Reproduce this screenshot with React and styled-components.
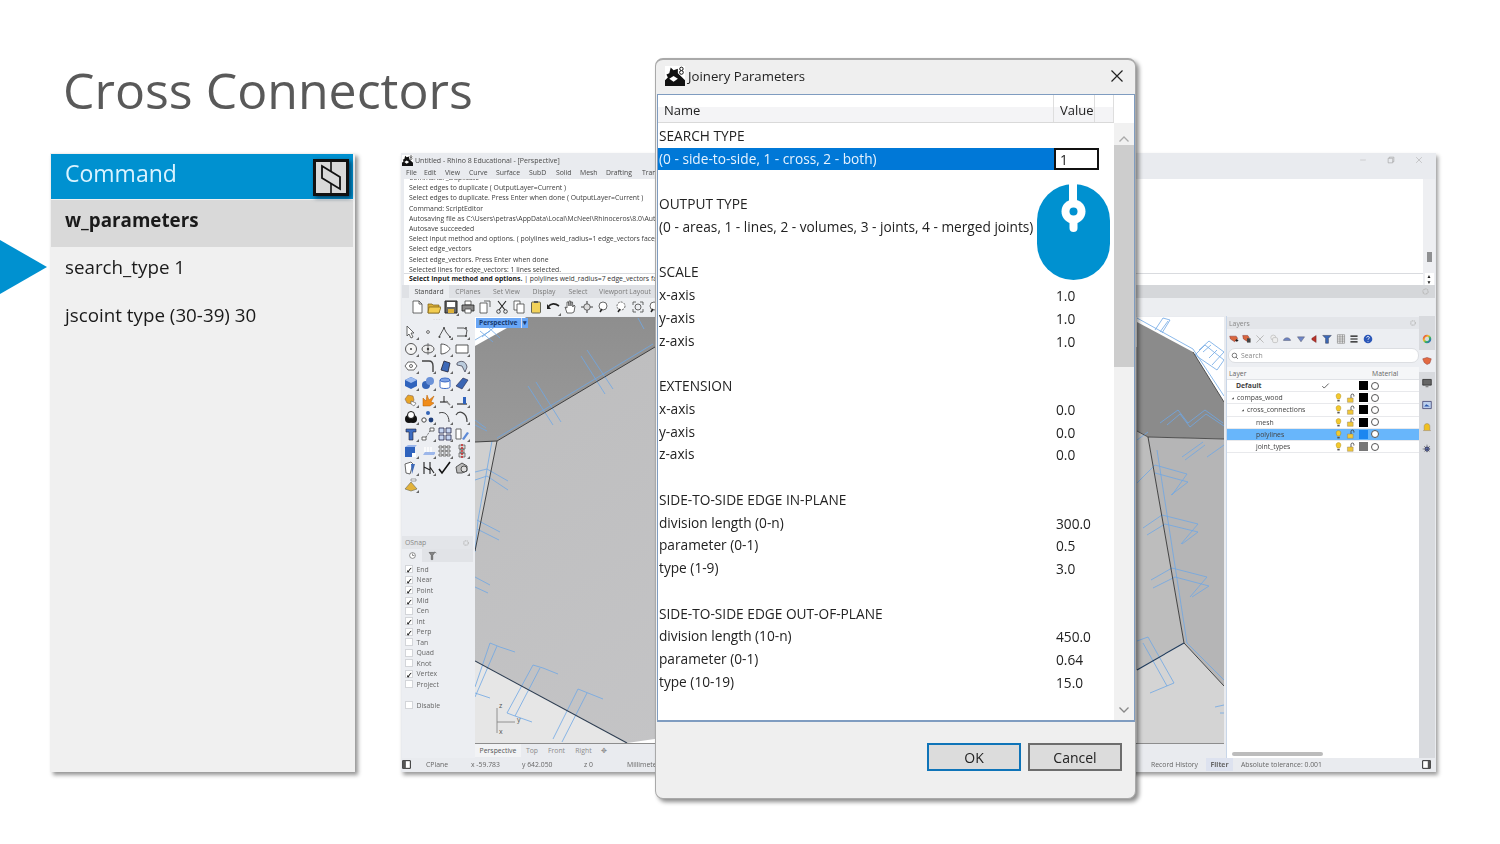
import React from 'react';
import styled, { createGlobalStyle } from 'styled-components';

const Global = createGlobalStyle`
  html, body { margin: 0; padding: 0; background: #fff; }
  body { font-family: "Open Sans", "Noto Sans", sans-serif; }
`;

const Slide = styled.div`
  position: relative;
  width: 1500px;
  height: 844px;
  overflow: hidden;
  background: #fff;
`;
const TitleBlock = styled.header`
  height: 153px;
  box-sizing: border-box;
  padding: 54px 0 0 63px;
`;
const Title = styled.h1`
  margin: 0;
  font: 400 50px/72px "Open Sans", sans-serif;
  color: #595959;
`;
const Content = styled.div`
  display: flex;
  align-items: flex-start;
`;
const Pointer = styled.div`
  width: 0;
  height: 0;
  margin-top: 87px;
  margin-right: 3px;
  border-left: 47px solid #0091d0;
  border-top: 27px solid transparent;
  border-bottom: 27px solid transparent;
`;
const CommandPanel = styled.section`
  position: relative;
  width: 305px;
  height: 619px;
  flex: none;
  margin-right: 46px;
  background: #f0f0f0;
  box-shadow: 3px 3px 4px rgba(0, 0, 0, 0.42);
  filter: blur(0.2px);
`;
const CommandHead = styled.div`
  height: 45px;
  margin: 1px 2px 0 1px;
  padding-left: 14px;
  background: #0091d0;
  color: #d9f3ff;
  font-size: 23px;
  line-height: 39px;
`;
const CommandRow = styled.div`
  height: 47px;
  margin: 1px 2px 0 1px;
  padding-left: 14px;
  font-size: 18.8px;
  line-height: ${p => (p.$head ? 40 : 38)}px;
  font-weight: ${p => (p.$head ? 700 : 400)};
  background: ${p => (p.$head ? '#d9d9d9' : 'transparent')};
  color: #1a1a1a;
`;
const CommandLogo = styled.svg`
  position: absolute;
  left: 263px;
  top: 6px;
  width: 36px;
  height: 37px;
  filter: drop-shadow(2px 2px 2px rgba(0, 40, 70, 0.8));
`;

/* Rhino window */
const RhinoWindow = styled.section`
  width: 1035px;
  height: 619px;
  flex: none;
  box-sizing: border-box;
  padding: 0 1px;
  display: flex;
  flex-direction: column;
  background: #e9ebef;
  box-shadow: 2px 3px 4px rgba(0, 0, 0, 0.4);
  font-size: 6.85px;
  color: #4a4a4a;
  filter: blur(0.42px);
`;
const RhinoTitle = styled.div`
  height: 14px;
  display: flex;
  align-items: center;
  gap: 2px;
  padding-left: 0;
  font-size: 7px;
`;
const WindowControls = styled.div`
  margin-left: auto;
  display: flex;
  gap: 20px;
  padding-right: 12px;
`;
const MenuBar = styled.nav`
  height: 12px;
  display: flex;
  align-items: center;
  padding: 0 0 1px 4px;
  box-sizing: border-box;
`;
const MenuItem = styled.span`
  width: ${p => p.$w}px;
`;
const History = styled.div`
  position: relative;
  height: 106px;
  margin: 0 12px 0 2px;
  background: #fff;
  overflow: hidden;
  color: #3c3c3c;
`;
const HistoryLines = styled.div`
  margin-top: -6px;
  padding-left: 5px;
  height: 100px;
`;
const HistoryLine = styled.div`
  height: 10.2px;
  line-height: 10.2px;
  white-space: nowrap;
`;
const HistoryInput = styled.div`
  position: absolute;
  left: 0;
  right: 0;
  top: 94px;
  height: 12px;
  border-top: 1px solid #d9dbdf;
  padding-left: 5px;
  line-height: 10px;
  white-space: nowrap;
  color: #333;
  background: #fff;
  b { color: #222; }
`;
const ScrollColumn = styled.div`
  height: 106px;
  margin-top: -106px;
  margin-left: auto;
  width: 12px;
  display: flex;
  flex-direction: column;
  align-items: center;
  background: #eeeff2;
`;
const ScrollThumb = styled.div`
  width: 5px;
  height: 10px;
  margin-top: 73px;
  background: #8f9092;
`;
const ScrollSpin = styled.div`
  margin-top: 11px;
  width: 9px;
  height: 12px;
  background: #fff;
  font-size: 5px;
  line-height: 6px;
  text-align: center;
  color: #222;
`;
const TabRow = styled.div`
  height: 13px;
  display: flex;
  align-items: center;
  background: linear-gradient(90deg, #dfe1e5 0 25%, #d5d7da 60%);
  padding-left: 7px;
  color: #777;
`;
const TabItem = styled.span`
  width: ${p => p.$w}px;
  text-align: center;
  color: ${p => (p.$on ? '#444' : '#7b7b7b')};
  background: ${p => (p.$on ? '#eceef1' : 'transparent')};
  line-height: 13px;
`;
const GearSlot = styled.span`
  margin-left: auto;
  padding-right: 5px;
  display: flex;
`;
const TopToolbar = styled.div`
  height: 18px;
  display: flex;
  align-items: center;
  padding-left: 6px;
  background: #eceef1;
`;
const ToolCell = styled.div`
  position: relative;
  width: ${p => p.$size || 17}px;
  height: ${p => p.$size || 17}px;
  display: flex;
  align-items: center;
  justify-content: center;
  flex: none;
  &::after {
    content: '';
    display: ${p => (p.$corner ? 'block' : 'none')};
    position: absolute;
    right: 0;
    bottom: 0;
    border-left: 3px solid transparent;
    border-bottom: 3px solid #666;
  }
`;
const Icon = styled.svg`
  width: ${p => p.$size || 14}px;
  height: ${p => p.$size || 14}px;
  display: block;
  flex: none;
`;
const Main = styled.div`
  flex: 1;
  display: flex;
  min-height: 0;
`;
const ToolColumn = styled.aside`
  width: 73px;
  flex: none;
  display: flex;
  flex-direction: column;
  background: #eceef2;
`;
const Grip = styled.div`
  height: 7px;
  text-align: center;
  font-size: 6px;
  line-height: 6px;
  letter-spacing: 1px;
  color: #aaa;
`;
const ToolGrid = styled.div`
  display: grid;
  grid-template-columns: repeat(4, 17px);
  grid-auto-rows: 17px;
`;
const SnapHead = styled.div`
  margin-top: auto;
  height: 13px;
  margin-right: 2px;
  display: flex;
  align-items: center;
  justify-content: space-between;
  padding: 0 3px;
  background: #e3e5e9;
  color: #888;
`;
const SnapTabs = styled.div`
  height: 13px;
  display: flex;
  background: #e1e3e7;
  margin-right: 2px;
`;
const SnapTab = styled.div`
  width: ${p => p.$w}px;
  display: flex;
  align-items: center;
  justify-content: center;
  background: ${p => (p.$on ? '#eceef2' : 'transparent')};
`;
const SnapList = styled.div`
  padding: 2px 0 0 3px;
  height: 196px;
  box-sizing: border-box;
`;
const SnapRow = styled.div`
  height: 10.45px;
  display: flex;
  align-items: center;
  gap: 3.5px;
  color: #666;
  margin-top: ${p => (p.$gap ? 11 : 0)}px;
`;
const SnapBox = styled.span`
  width: 8px;
  height: 8px;
  background: #fff;
  border: 0.5px solid #d3d5d9;
  box-sizing: border-box;
  font-size: 8px;
  line-height: 7px;
  text-align: center;
  color: #111;
  font-weight: 700;
`;
const ViewColumn = styled.div`
  position: relative;
  width: 749px;
  flex: none;
  display: flex;
  flex-direction: column;
`;
const ViewCanvas = styled.svg`
  display: block;
  width: 749px;
  height: 426px;
  margin-top: 1px;
`;
const ViewLabel = styled.div`
  position: absolute;
  left: 1px;
  top: 2px;
  height: 10px;
  width: 52px;
  display: flex;
  background: #69a6f6;
  color: #173a70;
  font-weight: 700;
  font-size: 6.6px;
  line-height: 10px;
  padding-left: 3px;
  box-sizing: border-box;
  justify-content: space-between;
  span:last-child { border-left: 1px solid #dde; padding: 0 1px; }
`;
const ViewTabs = styled.div`
  height: 14px;
  border-top: 1px solid #8d8d8d;
  box-sizing: border-box;
  display: flex;
  align-items: center;
  background: #e9ebef;
  color: #888;
`;
const ViewTab = styled.span`
  width: ${p => p.$w}px;
  text-align: center;
  line-height: 13px;
  color: ${p => (p.$on ? '#555' : '#8c8c8c')};
  background: ${p => (p.$on ? '#f2f3f5' : 'transparent')};
`;
const LayersPanel = styled.aside`
  width: 193px;
  flex: none;
  margin-left: 2px;
  display: flex;
  flex-direction: column;
  background: #eceef2;
  border-left: 1px solid #c8d6e8;
  box-sizing: border-box;
`;
const LayersHead = styled.div`
  height: 12px;
  margin-top: 1px;
  padding: 0 2px;
  display: flex;
  align-items: center;
  justify-content: space-between;
  background: #e3e5e9;
  color: #888;
`;
const LayerTools = styled.div`
  height: 17px;
  display: flex;
  align-items: center;
  margin-top: 2px;
`;
const SearchBox = styled.div`
  height: 13px;
  margin: 0 0 4px 1px;
  border-radius: 7px;
  background: #fff;
  display: flex;
  align-items: center;
  gap: 2px;
  padding-left: 2px;
  color: #888;
  border: 0.5px solid #dcdee2;
`;
const LayerBody = styled.div`
  flex: 1;
  background: #fff;
  position: relative;
`;
const LayerHeader = styled.div`
  height: 13px;
  display: grid;
  grid-template-columns: 94px 12px 13px 13px 10px 60px;
  align-items: center;
  background: #f5f6f8;
  border-bottom: 0.5px solid #e0e2e6;
  box-sizing: border-box;
  color: #666;
`;
const LayerRow = styled.div`
  height: 12.2px;
  display: grid;
  grid-template-columns: 94px 12px 13px 13px 10px 12px 1fr;
  align-items: center;
  border-bottom: 0.5px solid #e8e9ec;
  box-sizing: border-box;
  background: ${p => (p.$sel ? '#68b6fb' : 'transparent')};
  color: #444;
`;
const LayerName = styled.span`
  padding-left: ${p => p.$indent}px;
  font-weight: ${p => (p.$bold ? 700 : 400)};
  white-space: nowrap;
  display: flex;
  align-items: center;
  gap: 2px;
`;
const Swatch = styled.span`
  width: 9px;
  height: 9px;
  background: ${p => p.$c};
`;
const Radio = styled.span`
  width: 8px;
  height: 8px;
  margin-left: 2px;
  border-radius: 50%;
  background: ${p => (p.$on ? '#fff' : 'transparent')};
  border: 0.6px solid #555;
  box-sizing: border-box;
`;
const LayerScroll = styled.div`
  position: absolute;
  left: 5px;
  bottom: 2px;
  width: 91px;
  height: 4px;
  border-radius: 2px;
  background: #bcbcbc;
`;
const SideStrip = styled.aside`
  width: 16px;
  flex: none;
  padding-top: 12px;
  background: #d8dade;
  display: flex;
  flex-direction: column;
  align-items: center;
`;
const StripTab = styled.div`
  height: 22px;
  width: 100%;
  display: flex;
  align-items: center;
  justify-content: center;
  background: ${p => (p.$on ? '#eceef2' : 'transparent')};
`;
const StatusBar = styled.footer`
  height: 14px;
  padding-bottom: 1px;
  box-sizing: border-box;
  display: flex;
  align-items: center;
  color: #666;
  background: #e9ebef;
`;
const StatusItem = styled.span`
  width: ${p => p.$w}px;
  flex: none;
  white-space: nowrap;
  overflow: hidden;
  font-weight: ${p => (p.$on ? 700 : 400)};
  background: ${p => (p.$on ? '#dde2ef' : 'transparent')};
  text-align: ${p => (p.$on ? 'center' : 'left')};
  line-height: 13px;
`;

/* Dialog */
const Dialog = styled.section`
  position: absolute;
  left: 655px;
  top: 58px;
  width: 481px;
  height: 741px;
  box-sizing: border-box;
  display: flex;
  flex-direction: column;
  border-radius: 8px;
  background: #efefef;
  border: 1px solid #a9a9a9;
  border-top-width: 2px;
  box-shadow: 3px 3px 4px rgba(0, 0, 0, 0.45);
  font-family: "Open Sans", sans-serif;
  color: #222;
  filter: blur(0.3px);
`;
const DialogTitle = styled.div`
  height: 34px;
  flex: none;
  box-sizing: border-box;
  display: flex;
  align-items: center;
  padding: 0 11px 2px 9px;
  gap: 3px;
  font-size: 13.2px;
`;
const CloseGlyph = styled.svg`
  margin-left: auto;
  width: 14px;
  height: 14px;
`;
const TableBox = styled.div`
  flex: 1;
  min-height: 0;
  margin: 0 0 0 1px;
  border: 1px solid #7f9cc0;
  border-width: 1px 1px 2px 1px;
  background: #fff;
  display: flex;
  flex-direction: column;
  overflow: hidden;
`;
const TableHead = styled.div`
  height: 28px;
  width: 456px;
  flex: none;
  display: grid;
  grid-template-columns: 396px 41px 19px;
  background: linear-gradient(#fff 0 12px, #f4f4f6 12px);
  border-bottom: 1px solid #d9d9d9;
  font-size: 13px;
  box-sizing: border-box;
`;
const HeadCell = styled.div`
  padding: 6px 0 0 ${p => p.$pad}px;
  line-height: 18px;
  border-right: 1px solid #dedede;
`;
const TableBody = styled.div`
  flex: 1;
  min-height: 0;
  display: flex;
`;
const Rows = styled.div`
  width: 456px;
  flex: none;
  padding-top: 1.9px;
`;
const Row = styled.div`
  height: 22.75px;
  display: grid;
  grid-template-columns: 396px 60px;
  align-items: center;
  font-size: 13.7px;
  white-space: nowrap;
`;
const RowName = styled.div`
  height: 100%;
  line-height: 22.75px;
  padding-left: 1px;
  background: ${p => (p.$sel ? '#0078d7' : 'transparent')};
  color: ${p => (p.$sel ? '#e6f3ff' : '#222')};
`;
const RowValue = styled.div`
  padding-left: 2px;
`;
const ValueInput = styled.div`
  width: 45px;
  height: 22.75px;
  box-sizing: border-box;
  border: 2px solid #111;
  background: #fff;
  line-height: 19px;
  padding-left: 4px;
`;
const DialogScroll = styled.div`
  flex: 1;
  margin-top: -28px;
  display: flex;
  flex-direction: column;
  align-items: center;
  background: #f1f1f1;
`;
const ScrollCap = styled.div`
  height: ${p => p.$h}px;
  display: flex;
  align-items: flex-end;
  justify-content: center;
  width: 100%;
  padding-bottom: ${p => p.$pb}px;
  box-sizing: border-box;
  background: ${p => (p.$white ? 'linear-gradient(#fff 0 28px, #f1f1f1 28px)' : 'transparent')};
`;
const DialogThumb = styled.div`
  height: 222px;
  width: 100%;
  background: #cdcdcd;
  flex: none;
`;
const ScrollFill = styled.div`
  flex: 1;
`;
const DialogFooter = styled.div`
  height: 76px;
  flex: none;
  display: flex;
  justify-content: flex-end;
  gap: 7px;
  padding: 21px 13px 0 0;
  box-sizing: border-box;
`;
const DialogButton = styled.div`
  width: 94px;
  height: 28px;
  box-sizing: border-box;
  border: 2px solid ${p => (p.$primary ? '#0f74b8' : '#6d6d6d')};
  background: #dcdcdc;
  text-align: center;
  font-size: 14px;
  line-height: 25px;
  color: #222;
`;
const MouseBadge = styled.svg`
  position: absolute;
  left: 1037px;
  top: 184px;
  width: 73px;
  height: 96px;
`;

const s = '#444';
const b = '#3e6cc6';
const ICONS = {
  newdoc: <><path d="M3 1h6l3 3v9H3z" fill="#fff" stroke={s} strokeWidth=".8" /><path d="M9 1v3h3" fill="none" stroke={s} strokeWidth=".8" /></>,
  open: <><path d="M1 4h4l1 1h6v8H1z" fill="#d9b03c" stroke="#7a5c10" strokeWidth=".7" /><path d="M2 7h12l-2 6H1z" fill="#f2cc50" stroke="#7a5c10" strokeWidth=".7" /></>,
  save: <><path d="M1 1h12v12H1z" fill="#666" stroke="#222" /><path d="M3 2h8v5H3z" fill="#fff" /><path d="M4 9h6v4H4z" fill="#ddb13a" /></>,
  print: <><path d="M4 1h6v4H4z" fill="#fff" stroke={s} strokeWidth=".8" /><path d="M1 5h12v6H1z" fill="#888" stroke="#222" strokeWidth=".8" /><path d="M4 9h6v4H4z" fill="#fff" stroke={s} strokeWidth=".8" /></>,
  copydoc: <><path d="M2 3h7v10H2z" fill="#fff" stroke={s} strokeWidth=".8" /><path d="M6 1h6v6" fill="none" stroke={s} strokeWidth=".8" /></>,
  cut: <><path d="M3 1l7 9M11 1l-7 9" stroke="#222" strokeWidth="1.1" /><circle cx="3.500" cy="11.500" r="1.800" fill="none" stroke={s} /><circle cx="10.500" cy="11.500" r="1.800" fill="none" stroke={s} /></>,
  dup: <><path d="M2 1h6v9H2z" fill="#fff" stroke={s} strokeWidth=".8" /><path d="M5 4h7v9H5z" fill="#fff" stroke={s} strokeWidth=".8" /></>,
  paste: <><rect x="2.500" y="2" width="9" height="11" rx="1" fill="#f2d25a" stroke="#665" /><path d="M5 1h4v2H5z" fill="#555" /></>,
  undo: <><path d="M2 7c3-4 7-4 11-1" fill="none" stroke="#222" strokeWidth="1.6" /><path d="M1 4v5h4z" fill="#222" /></>,
  hand: <path d="M4 13L2 7l2 1V2l1.500 0 .5 4V1h1.500l.5 5V2h1.500l.3 5 1.200-2 1 1-1 6-2 1z" fill="#fff" stroke={s} strokeWidth=".8" />,
  move: <><path d="M7 1v12M1 7h12" stroke={s} strokeWidth="1.100" /><circle cx="7" cy="7" r="3.200" fill="#ddd" stroke={s} strokeWidth=".8" /></>,
  zoom: <><circle cx="6" cy="6" r="4" fill="#fff" stroke={s} strokeWidth=".8" /><path d="M3 12l2-3" stroke="#222" strokeWidth="1.500" /></>,
  zoomd: <><circle cx="7" cy="6" r="4" fill="#fff" stroke={s} strokeWidth=".8" strokeDasharray="2 1" /><path d="M4 12l2-3" stroke="#222" strokeWidth="1.500" /></>,
  zoomx: <><path d="M2 2h3M9 2h3M2 12h3M9 12h3M2 2v3M12 2v3M2 9v3M12 9v3" stroke={s} strokeWidth=".8" /><circle cx="7" cy="7" r="3" fill="none" stroke={s} strokeWidth=".8" /></>,
  arrow: <path d="M3 1l7 7H7l2 4-2 1-2-4-2 2z" fill="#fff" stroke={s} strokeWidth=".8" />,
  point: <circle cx="7" cy="7" r="1.400" fill="#fff" stroke={s} strokeWidth=".8" />,
  poly: <><path d="M1 12l5-9 2 4 4 5" fill="none" stroke={s} strokeWidth=".9" /><circle cx="6" cy="3" r="1" fill={s} /><circle cx="1.500" cy="12" r="1" fill={s} /><circle cx="12" cy="12" r="1" fill={s} /></>,
  curve: <><path d="M2 3h7l3 2-1 6H2" fill="none" stroke={s} strokeWidth=".9" /><circle cx="11" cy="3" r="1" fill={s} /><circle cx="11" cy="11" r="1" fill={s} /></>,
  circle: <><circle cx="7" cy="7" r="5.500" fill="#f5f5f5" stroke={s} strokeWidth=".9" /><circle cx="7" cy="7" r="1" fill={s} /></>,
  ellipse: <><ellipse cx="7" cy="7" rx="6" ry="4" fill="#eee" stroke={s} strokeWidth=".9" /><circle cx="7" cy="7" r="1.200" fill={s} /><path d="M7 1v12" stroke={s} strokeWidth=".6" /></>,
  arc: <path d="M3 2c7 0 9 5 9 5s-3 5-9 5z" fill="#fff" stroke={s} strokeWidth=".9" />,
  rect: <path d="M1 3h12v8H1z" fill="#fff" stroke={s} strokeWidth=".9" />,
  hex: <><path d="M1 7l3-4h6l3 4-3 4H4z" fill="#fff" stroke={s} strokeWidth=".8" /><circle cx="7" cy="7" r="1.500" fill="none" stroke={s} strokeWidth=".8" /></>,
  fillet: <path d="M1 2h7c3 0 4 2 4 5v6" fill="none" stroke="#444" strokeWidth="1.400" />,
  surf: <path d="M3 11l3-9 6 2-2 9z" fill="#3d69b8" stroke="#223" strokeWidth=".8" />,
  patch: <path d="M2 4c4-3 9-2 10 4l-2 5-3-6-5-1z" fill="#bcd" stroke="#445" strokeWidth=".8" />,
  box: <><path d="M1 4l6-3 6 3v6l-6 3-6-3z" fill="#2f63bd" /><path d="M1 4l6 3 6-3-6-3z" fill="#9dbcf0" /></>,
  balls: <><circle cx="5" cy="9" r="4" fill="#3565b8" /><circle cx="9" cy="5" r="4" fill="#6b92d8" /></>,
  cyl: <><path d="M2 4v7c0 2 10 2 10 0V4z" fill="#fff" stroke={b} /><ellipse cx="7" cy="4" rx="5" ry="2" fill="#7ea2e4" stroke={b} /></>,
  plane: <path d="M1 10l7-8 5 2-6 9z" fill="#3b66b4" stroke="#224" strokeWidth=".6" />,
  orange: <><path d="M1 6l3-4 5 1 1 4-2 4-5-1z" fill="#e8a526" stroke="#865" strokeWidth=".6" /><path d="M7 8l5 2-2 3-3-2z" fill="#fff" stroke="#555" strokeWidth=".6" /></>,
  burst: <path d="M2 13V5l3 3 1-6 2 5 5-4-3 6 3 1-4 3z" fill="#f08c1a" stroke="#b65c00" strokeWidth=".5" />,
  dimL: <><path d="M2 9h8" stroke="#222" strokeWidth="1.100" /><path d="M6 3v6" stroke="#222" /><path d="M8 8l4 4" stroke="#888" strokeWidth="1.400" /></>,
  dimR: <><path d="M2 11h10" stroke="#222" strokeWidth="1.100" /><path d="M8 4h3v7H8z" fill="#2f63bd" /></>,
  black: <><circle cx="5" cy="9" r="4" fill="#111" /><circle cx="9" cy="9" r="4" fill="#111" /><circle cx="7" cy="5" r="3.500" fill="#fff" stroke="#111" /></>,
  scatter: <><circle cx="7" cy="3" r="2" fill="#3565b8" /><circle cx="3" cy="10" r="2.200" fill="#fff" stroke={s} /><circle cx="10" cy="10" r="2.400" fill="#1f3f7a" /></>,
  arcline: <path d="M1 3c6-2 10 2 10 9" fill="none" stroke={s} />,
  arcline2: <path d="M1 5c3-5 11-3 11 7" fill="none" stroke={s} strokeWidth="1.200" />,
  tee: <path d="M2 2h10v3H9v8H5V5H2z" fill="#3d6cc0" stroke="#223" strokeWidth=".6" />,
  moveline: <><path d="M1 10h4v3H1zM9 1h4v3H9z" fill="#fff" stroke={s} strokeWidth=".8" /><path d="M5 10l4-6" stroke={s} strokeDasharray="1 1" /></>,
  arr: <path d="M1 1h5v5H1zM8 1h5v5H8zM8 8h5v5H8zM1 8h5v5H1z" fill="#c6d6f2" stroke="#224" strokeWidth=".8" />,
  ruler: <><path d="M1 2h5v10H1z" fill="#fff" stroke="#666" /><path d="M7 12l5-7 2 1-5 7z" fill="#5d8ad8" /></>,
  boxw: <><path d="M1 3h10v10H1z" fill="#2f63bd" /><path d="M1 3l3-2h9l-2 2z" fill="#9db7ea" /><path d="M8 9h4v4H8z" fill="#fff" /></>,
  arrows: <><path d="M2 11l2-3h11l-2 3z" fill="#9db7ea" /><path d="M4 3v5M7 3v5M10 3v5" stroke="#fff" strokeWidth="1.400" /></>,
  grid: <path d="M1 2h3v2H1zM5 2h3v2H5zM9 2h3v2H9zM1 6h3v2H1zM5 6h3v2H5zM9 6h3v2H9zM1 10h3v2H1zM5 10h3v2H5zM9 10h3v2H9z" fill="#fff" stroke={s} strokeWidth=".7" />,
  red: <><path d="M4 1h6v4H4zM5 5h4v4H5zM4 9h6v4H4z" fill="#d6d6d6" stroke="#555" strokeWidth=".7" /><path d="M7 0v14" stroke="#c22" strokeWidth="1.400" strokeDasharray="2 1" /></>,
  flat: <><path d="M1 3l6-2 2 2-3 10-4-1z" fill="#fff" stroke="#444" strokeWidth=".8" /><path d="M7 3l4 0-3 10z" fill="#3d69b8" /></>,
  forks: <path d="M3 1v12M9 1v12M3 6l6 3M9 6l4 6" stroke="#222" strokeWidth="1.100" />,
  check: <path d="M1 8l3 4 8-11" fill="none" stroke="#111" strokeWidth="1.600" />,
  shape: <><path d="M1 6l6-4 5 3v5l-5 2H2z" fill="#bbb" stroke="#333" strokeWidth=".8" /><circle cx="9" cy="8" r="3" fill="#ddd" stroke="#333" strokeWidth=".8" /></>,
  cone: <><path d="M7 4l6 7-6 2-6-2z" fill="#e2b23a" stroke="#665" strokeWidth=".6" /><path d="M7 1h5v2H7z" fill="#fff" stroke="#666" strokeWidth=".6" /></>,
  gear: <circle cx="7" cy="7" r="4" fill="none" stroke="#b9b9b9" strokeWidth="2" strokeDasharray="2 1" />,
  snapA: <><circle cx="7" cy="7" r="4.500" fill="#fff" stroke="#555" /><path d="M7 4v3h3" stroke="#555" fill="none" /></>,
  snapB: <path d="M3 2h8l-3 4v6H6V6zM11 1l2 2" fill="#888" stroke="#444" strokeWidth=".8" />,
  layAdd: <><path d="M1 3h9l2 3-4 5-6-4z" fill="#d9663e" stroke="#722" strokeWidth=".6" /><path d="M9 9h4M11 7v4" stroke="#111" strokeWidth="1.300" /></>,
  layDup: <><path d="M1 2h7l2 3-3 5-5-3z" fill="#d9663e" stroke="#722" strokeWidth=".6" /><path d="M7 6h5v6H7z" fill="#444" /></>,
  xGray: <path d="M2 2l10 10M12 2L2 12" stroke="#bbb" strokeWidth="1.400" />,
  copyGray: <><circle cx="6" cy="5" r="3.500" fill="#eee" stroke="#bbb" /><rect x="5" y="5" width="7" height="7" rx="2" fill="#eee" stroke="#bbb" /></>,
  up: <path d="M2 9c1-5 9-5 10 0z" fill="#6f86c8" stroke="#445" strokeWidth=".6" />,
  down: <path d="M2 4h10L7 11z" fill="#6f86c8" stroke="#445" strokeWidth=".6" />,
  speak: <path d="M10 2v10L4 8V6z" fill="#b8322a" stroke="#511" strokeWidth=".5" />,
  funnel: <path d="M1 2h12L9 6v7H5V6z" fill="#3c69b8" stroke="#223" strokeWidth=".6" />,
  table: <path d="M2 1h10v12H2zM2 4h10M2 7h10M2 10h10M5.500 1v12M9 1v12" fill="#eee" stroke="#777" strokeWidth=".8" />,
  menu: <path d="M2 3h10M2 7h10M2 11h10" stroke="#111" strokeWidth="1.500" />,
  help: <><circle cx="7" cy="7" r="6" fill="#2c57b8" /><path d="M5 5c0-2 4-2 4 0 0 1.500-2 1.500-2 3M7 10v1" stroke="#fff" fill="none" strokeWidth="1.200" /></>,
  wheel: <circle cx="7" cy="7" r="4.500" fill="none" stroke="url(#wheelGrad)" strokeWidth="3" />,
  layer: <path d="M1 4l6-2 6 2-2 6-4 2-4-3z" fill="#e26a42" stroke="#833" strokeWidth=".6" />,
  monitor: <><path d="M1 2h12v8H1z" fill="#666" stroke="#222" /><path d="M5 11h4v2H5z" fill="#888" /></>,
  photo: <><path d="M1 2h12v10H1z" fill="#bcd0ee" stroke="#336" /><path d="M3 9l3-3 5 3z" fill="#2a56ac" /></>,
  bell: <path d="M3 11V6c0-5 8-5 8 0v5l1 1H2z" fill="#f0c020" stroke="#876" strokeWidth=".6" />,
  cog: <><circle cx="7" cy="7" r="3" fill="#6b80d0" stroke="#223" /><path d="M7 1v12M1 7h12M3 3l8 8M11 3l-8 8" stroke="#334" strokeWidth=".9" strokeDasharray="1.500 1.500" /></>,
  bulb: <><path d="M4 5c0-4 6-4 6 0 0 2-1 3-1.500 4h-3C5 8 4 7 4 5z" fill="#f4c92d" stroke="#a08010" strokeWidth=".5" /><path d="M5.500 10h3v2h-3z" fill="#555" /></>,
  lock: <><path d="M2 7h8v6H2z" fill="#f0c838" stroke="#876" strokeWidth=".6" /><path d="M7 7V3c0-2 4-2 4 0v2" fill="none" stroke="#333" strokeWidth="1.100" /></>,
  tri: <path d="M2 11h8V4z" fill="#444" />,
  search: <><circle cx="6" cy="6" r="4" fill="none" stroke="#444" strokeWidth="1.200" /><path d="M9 9l3 3" stroke="#444" strokeWidth="1.400" /></>,
  tick: <path d="M2 8l3 3 7-7" fill="none" stroke="#222" strokeWidth="1.100" />,
  panel: <><path d="M1 1h12v12H1z" fill="#fff" stroke="#222" strokeWidth="1.500" /><path d="M1 1h5v12H1z" fill="#555" /></>,
  panelR: <><path d="M1 1h12v12H1z" fill="#fff" stroke="#222" strokeWidth="1.500" /><path d="M9 1h4v12H9z" fill="#555" /></>,
  min: <path d="M2 7h10" stroke="#bbb" />,
  max: <><path d="M2 4h8v8H2z" fill="none" stroke="#999" /><path d="M4 4V2h8v8h-2" fill="none" stroke="#999" /></>,
  close: <path d="M2 2l10 10M12 2L2 12" stroke="#aaa" />,
  appIcon: <>
    <path d="M0 0h14v14H0z" fill="#fff" />
    <path d="M0 14V10L2 8 1 6l2-1 1-4 2 2 3-1v3l2 2 3 3v4z" fill="#111" />
    <path d="M3 9l3-2 3 2-3 2z" fill="#fff" />
    <circle cx="11.500" cy="2" r="1.200" fill="#fff" stroke="#111" strokeWidth=".7" />
    <circle cx="11.500" cy="4.500" r="1.300" fill="#fff" stroke="#111" strokeWidth=".7" />
  </>,
};

const Glyph = ({ name, size }) => (
  <Icon viewBox="0 0 14 14" $size={size}>{ICONS[name]}</Icon>
);

const TOP_TOOLS = ['newdoc', 'open', 'save', 'print', 'copydoc', 'cut', 'dup', 'paste', 'undo', 'hand', 'move', 'zoom', 'zoomd', 'zoomx', 'zoom'];
const LEFT_TOOLS = [
  'arrow', 'point', 'poly', 'curve',
  'circle', 'ellipse', 'arc', 'rect',
  'hex', 'fillet', 'surf', 'patch',
  'box', 'balls', 'cyl', 'plane',
  'orange', 'burst', 'dimL', 'dimR',
  'black', 'scatter', 'arcline', 'arcline2',
  'tee', 'moveline', 'arr', 'ruler',
  'boxw', 'arrows', 'grid', 'red',
  'flat', 'forks', 'check', 'shape',
  'cone',
];
const NO_CORNER = ['point', 'check'];
const LAYER_TOOLS = ['layAdd', 'layDup', 'xGray', 'copyGray', 'up', 'down', 'speak', 'funnel', 'table', 'menu', 'help'];
const STRIP = ['wheel', 'layer', 'monitor', 'photo', 'bell', 'cog'];
const SNAPS = [['End', 1], ['Near', 1], ['Point', 1], ['Mid', 1], ['Cen', 0], ['Int', 1], ['Perp', 1], ['Tan', 0], ['Quad', 0], ['Knot', 0], ['Vertex', 1], ['Project', 0]];
const HISTORY = [
  'Command: _Duplicate',
  'Select edges to duplicate ( OutputLayer=Current )',
  'Select edges to duplicate. Press Enter when done ( OutputLayer=Current )',
  'Command: ScriptEditor',
  'Autosaving file as C:\\Users\\petras\\AppData\\Local\\McNeel\\Rhinoceros\\8.0\\AutoSave\\Untitled.3dm',
  'Autosave succeeded',
  'Select input method and options. ( polylines  weld_radius=1  edge_vectors  face_vectors  adjacency )',
  'Select edge_vectors',
  'Select edge_vectors. Press Enter when done',
  'Selected lines for edge_vectors: 1 lines selected.',
];
const MENU = [['File', 18], ['Edit', 21], ['View', 24], ['Curve', 27], ['Surface', 33], ['SubD', 27], ['Solid', 24], ['Mesh', 26], ['Drafting', 36], ['Transform', 40]];
const TABS = [['Standard', 40, 1], ['CPlanes', 38], ['Set View', 39], ['Display', 36], ['Select', 32], ['Viewport Layout', 62]];
const LAYERS = [
  { name: 'Default', indent: 9, bold: true, check: true, c: '#000' },
  { name: 'compas_wood', indent: 4, tri: true, c: '#000', icons: true },
  { name: 'cross_connections', indent: 14, tri: true, c: '#000', icons: true },
  { name: 'mesh', indent: 29, c: '#000', icons: true },
  { name: 'polylines', indent: 29, c: '#1c86f0', icons: true, sel: true },
  { name: 'joint_types', indent: 29, c: '#777', icons: true },
];
const TABLE = [
  ['SEARCH TYPE'],
  ['(0 - side-to-side, 1 - cross, 2 - both)', '1', true],
  [''],
  ['OUTPUT TYPE'],
  ['(0 - areas, 1 - lines, 2 - volumes, 3 - joints, 4 - merged joints)'],
  [''],
  ['SCALE'],
  ['x-axis', '1.0'], ['y-axis', '1.0'], ['z-axis', '1.0'],
  [''],
  ['EXTENSION'],
  ['x-axis', '0.0'], ['y-axis', '0.0'], ['z-axis', '0.0'],
  [''],
  ['SIDE-TO-SIDE EDGE IN-PLANE'],
  ['division length (0-n)', '300.0'], ['parameter (0-1)', '0.5'], ['type (1-9)', '3.0'],
  [''],
  ['SIDE-TO-SIDE EDGE OUT-OF-PLANE'],
  ['division length (10-n)', '450.0'], ['parameter (0-1)', '0.64'], ['type (10-19)', '15.0'],
];
const WIRES = [
  '497,438 653,344', '492,441 478,520 475,552',
  '581,356 605,394', '587,350 613,389', '528,386 553,425', '536,382 561,422', '638,318 644,329',
  '475,420 486,428', '475,425 487,431',
  '480,331 493,342', '488,327 500,338', '482,337 497,325', '475,340 490,331',
  '475,472 487,469 508,481', '475,480 487,476 508,490',
  '477,520 500,532', '477,529 499,540', '475,577 490,585', '475,587 488,593',
  '475,687 490,643 500,647 515,652', '475,697 497,646',
  '507,713 533,665 543,668 558,674', '515,716 540,668', '507,713 515,716 532,722',
  '553,739 578,689 588,693 603,699', '562,742 587,693', '475,693 490,698',
  '1157,450 1187,643 1224,680',
  '1137,483 1155,465 1187,474 1172,495', '1155,473 1188,482 1171,495',
  '1143,528 1162,515 1198,524 1181,544', '1147,535 1165,524 1198,532 1182,544',
  '1151,580 1172,568 1207,577 1190,597', '1153,588 1175,577 1209,586 1192,597',
  '1137,641 1148,637 1174,683 1150,693', '1143,643 1167,686', '1215,707 1224,705', '1220,713 1224,713',
  '1137,318 1193,349 1224,396',
  '1155,330 1163,318 1170,320 1162,333', '1160,332 1168,321',
  '1195,355 1205,345 1224,360 1217,370 1195,355', '1203,352 1211,345', '1209,358 1217,350',
  '1199,350 1209,341 1224,352', '1212,365 1224,352',
  '1160,423 1178,410 1188,423 1205,410 1223,423', '1167,425 1180,414 1190,427 1206,414 1224,426',
  '1182,457 1203,442', '1185,460 1205,445', '1207,457 1224,445', '1137,440 1148,432',
];

const Viewport = () => (
  <ViewCanvas viewBox="475 317 749 426" preserveAspectRatio="none">
    <defs>
      <linearGradient id="darkFace" x1="0" y1="0" x2="0" y2="1">
        <stop offset="0" stopColor="#8e8e8e" />
        <stop offset="1" stopColor="#9a9a9a" />
      </linearGradient>
      <linearGradient id="lightFace" x1="0" y1="0" x2="1" y2="1">
        <stop offset="0" stopColor="#bdbdbe" />
        <stop offset="1" stopColor="#c8c8ca" />
      </linearGradient>
    </defs>
    <rect x="475" y="317" width="749" height="426" fill="#fff" />
    <polygon points="475,442 497,441 653,347 1137,347 1137,670 627,743 475,661" fill="url(#lightFace)" />
    <polygon points="475,661 627,743 475,743" fill="#e6e6e6" />
    <polygon points="475,442 497,441 475,551" fill="#cfcfcf" />
    <polygon points="475,346 530,315 655,315 655,347 497,441 475,442" fill="url(#darkFace)" />
    <polygon points="1137,322 1193,352 1224,402 1224,439 1148,437 1137,431" fill="#8b8b8b" />
    <polygon points="1137,431 1148,437 1184,643 1137,670" fill="#bdbdbd" />
    <polygon points="1148,437 1224,439 1224,686 1184,643" fill="#b5b5b6" />
    <polygon points="1184,643 1224,686 1224,743 1137,743 1137,670" fill="#d4d4d4" />
    <g fill="none" stroke="#6ea7e4" strokeWidth="0.8">
      {WIRES.map(w => <polyline key={w} points={w} />)}
    </g>
    <g fill="none" strokeWidth="0.9">
      <polyline points="475,442 497,441 655,347" stroke="#333" />
      <polyline points="497,441 475,551" stroke="#333" />
      <polyline points="475,661 627,743" stroke="#2c3c50" strokeWidth="1.100" />
      <polyline points="1137,431 1148,437 1224,439" stroke="#444" />
      <polyline points="1193,352 1224,402" stroke="#444" />
      <polyline points="1148,437 1184,643 1224,686" stroke="#333" />
      <polyline points="1184,643 1137,670" stroke="#1f3b5c" strokeWidth="1.100" />
      <polyline points="515,722 497,722 497,708" stroke="#888" />
      <polyline points="497,722 497,733" stroke="#888" />
    </g>
    <g fill="#555" fontSize="7" fontFamily="Open Sans, sans-serif">
      <text x="499" y="708">z</text>
      <text x="517" y="722">y</text>
      <text x="499" y="734">x</text>
    </g>
  </ViewCanvas>
);

export default function App() {
  return (
    <Slide>
      <Global />
      <TitleBlock><Title>Cross Connectors</Title></TitleBlock>
      <Content>
        <Pointer />
        <CommandPanel>
          <CommandHead>Command</CommandHead>
          <CommandRow $head>w_parameters</CommandRow>
          <CommandRow>search_type 1</CommandRow>
          <CommandRow>jscoint type (30-39) 30</CommandRow>
          <CommandLogo viewBox="0 0 36 37">
            <rect x="1.500" y="1.500" width="33" height="34" fill="#d9d9d9" stroke="#111" strokeWidth="3" />
            <path d="M18 3v32" stroke="#111" strokeWidth="1.600" />
            <path d="M9 7l18 11v12L9 19z" fill="#d9d9d9" stroke="#111" strokeWidth="1.800" />
          </CommandLogo>
        </CommandPanel>
        <RhinoWindow>
          <RhinoTitle>
            <Glyph name="appIcon" size={11} />
            Untitled - Rhino 8 Educational - [Perspective]
            <WindowControls>
              <Glyph name="min" size={8} />
              <Glyph name="max" size={8} />
              <Glyph name="close" size={8} />
            </WindowControls>
          </RhinoTitle>
          <MenuBar>
            {MENU.map(([m, w]) => <MenuItem key={m} $w={w}>{m}</MenuItem>)}
          </MenuBar>
          <History>
            <HistoryLines>
              {HISTORY.map(l => <HistoryLine key={l}>{l}</HistoryLine>)}
            </HistoryLines>
            <HistoryInput>
              <b>Select input method and options.</b> | polylines  weld_radius=7  edge_vectors  face_vectors
            </HistoryInput>
          </History>
          <ScrollColumn>
            <ScrollThumb />
            <ScrollSpin>▲<br />▼</ScrollSpin>
          </ScrollColumn>
          <TabRow>
            {TABS.map(([t, w, on]) => <TabItem key={t} $w={w} $on={on}>{t}</TabItem>)}
            <GearSlot><Glyph name="gear" size={9} /></GearSlot>
          </TabRow>
          <TopToolbar>
            {TOP_TOOLS.map((t, i) => (
              <ToolCell key={i} $corner={t === 'save' || t === 'undo'}><Glyph name={t} /></ToolCell>
            ))}
          </TopToolbar>
          <Main>
            <ToolColumn>
              <Grip>····</Grip>
              <ToolGrid>
                {LEFT_TOOLS.map(t => (
                  <ToolCell key={t} $corner={!NO_CORNER.includes(t)}><Glyph name={t} /></ToolCell>
                ))}
              </ToolGrid>
              <SnapHead>OSnap<Glyph name="gear" size={8} /></SnapHead>
              <SnapTabs>
                <SnapTab $w={20} $on><Glyph name="snapA" size={9} /></SnapTab>
                <SnapTab $w={20}><Glyph name="snapB" size={10} /></SnapTab>
              </SnapTabs>
              <SnapList>
                {SNAPS.map(([n, on]) => (
                  <SnapRow key={n}><SnapBox>{on ? '✓' : ''}</SnapBox>{n}</SnapRow>
                ))}
                <SnapRow $gap><SnapBox />Disable</SnapRow>
              </SnapList>
            </ToolColumn>
            <ViewColumn>
              <Viewport />
              <ViewLabel><span>Perspective</span><span>▾</span></ViewLabel>
              <ViewTabs>
                <ViewTab $w={46} $on>Perspective</ViewTab>
                <ViewTab $w={22}>Top</ViewTab>
                <ViewTab $w={27}>Front</ViewTab>
                <ViewTab $w={27}>Right</ViewTab>
                <ViewTab $w={14}>✥</ViewTab>
              </ViewTabs>
            </ViewColumn>
            <LayersPanel>
              <LayersHead>Layers<Glyph name="gear" size={8} /></LayersHead>
              <LayerTools>
                {LAYER_TOOLS.map(t => (
                  <ToolCell key={t} $size={13.4}><Glyph name={t} size={10} /></ToolCell>
                ))}
              </LayerTools>
              <SearchBox><Glyph name="search" size={8} />Search</SearchBox>
              <LayerBody>
                <LayerHeader>
                  <LayerName $indent={2}>Layer</LayerName>
                  <span /><span /><span /><span />
                  <LayerName $indent={3}>Material</LayerName>
                </LayerHeader>
                {LAYERS.map(l => (
                  <LayerRow key={l.name} $sel={l.sel}>
                    <LayerName $indent={l.indent} $bold={l.bold}>
                      {l.tri && <Glyph name="tri" size={4} />}{l.name}
                    </LayerName>
                    {l.check ? <Glyph name="tick" size={9} /> : <span />}
                    {l.icons ? <Glyph name="bulb" size={11} /> : <span />}
                    {l.icons ? <Glyph name="lock" size={10} /> : <span />}
                    <Swatch $c={l.c} />
                    <Radio $on={l.sel} />
                    <span />
                  </LayerRow>
                ))}
                <LayerScroll />
              </LayerBody>
            </LayersPanel>
            <SideStrip>
              <svg width="0" height="0">
                <defs>
                  <linearGradient id="wheelGrad" x1="0" y1="0" x2="1" y2="1">
                    <stop offset="0" stopColor="#e8383c" />
                    <stop offset=".35" stopColor="#f0c030" />
                    <stop offset=".65" stopColor="#30b060" />
                    <stop offset="1" stopColor="#3060d0" />
                  </linearGradient>
                </defs>
              </svg>
              {STRIP.map((t, i) => (
                <StripTab key={t} $on={i === 1}><Glyph name={t} size={10} /></StripTab>
              ))}
            </SideStrip>
          </Main>
          <StatusBar>
            <StatusItem $w={24}><Glyph name="panel" size={9} /></StatusItem>
            <StatusItem $w={45}>CPlane</StatusItem>
            <StatusItem $w={51}>x -59.783</StatusItem>
            <StatusItem $w={62}>y 642.050</StatusItem>
            <StatusItem $w={43}>z 0</StatusItem>
            <StatusItem $w={524}>Millimeters</StatusItem>
            <StatusItem $w={55}>Record History</StatusItem>
            <StatusItem $w={27} $on>Filter</StatusItem>
            <StatusItem $w={8} />
            <StatusItem $w={181}>Absolute tolerance: 0.001</StatusItem>
            <Glyph name="panelR" size={9} />
          </StatusBar>
        </RhinoWindow>
      </Content>
      <Dialog>
        <DialogTitle>
          <Glyph name="appIcon" size={20} />
          Joinery Parameters
          <CloseGlyph viewBox="0 0 14 14">
            <path d="M1.500 1.500l11 11M12.500 1.500l-11 11" stroke="#222" strokeWidth="1.200" />
          </CloseGlyph>
        </DialogTitle>
        <TableBox>
          <TableHead>
            <HeadCell $pad={6}>Name</HeadCell>
            <HeadCell $pad={6}>Value</HeadCell>
            <HeadCell $pad={0} />
          </TableHead>
          <TableBody>
            <Rows>
              {TABLE.map(([n, v, sel], i) => (
                <Row key={i}>
                  <RowName $sel={sel}>{n}</RowName>
                  {sel ? <ValueInput>{v}</ValueInput> : <RowValue>{v}</RowValue>}
                </Row>
              ))}
            </Rows>
            <DialogScroll>
              <ScrollCap $h={50} $pb={2} $white>
                <svg width="12" height="8" viewBox="0 0 12 8"><path d="M1.500 6.500L6 2l4.500 4.500" fill="none" stroke="#aaa" strokeWidth="1.300" /></svg>
              </ScrollCap>
              <DialogThumb />
              <ScrollFill />
              <ScrollCap $h={20} $pb={6}>
                <svg width="12" height="8" viewBox="0 0 12 8"><path d="M1.500 1.500L6 6l4.500-4.500" fill="none" stroke="#888" strokeWidth="1.300" /></svg>
              </ScrollCap>
            </DialogScroll>
          </TableBody>
        </TableBox>
        <DialogFooter>
          <DialogButton $primary>OK</DialogButton>
          <DialogButton>Cancel</DialogButton>
        </DialogFooter>
      </Dialog>
      <MouseBadge viewBox="0 0 73 96">
        <rect x="0" y="0" width="73" height="96" rx="36.500" fill="#0091d0" />
        <path d="M32 0h8v20h-8z" fill="#fff" />
        <circle cx="36.500" cy="27.500" r="12" fill="#fff" />
        <path d="M32.500 36v8a4 4 0 0 0 8 0v-8z" fill="#fff" />
        <circle cx="36.500" cy="27.500" r="4" fill="#0091d0" />
      </MouseBadge>
    </Slide>
  );
}
